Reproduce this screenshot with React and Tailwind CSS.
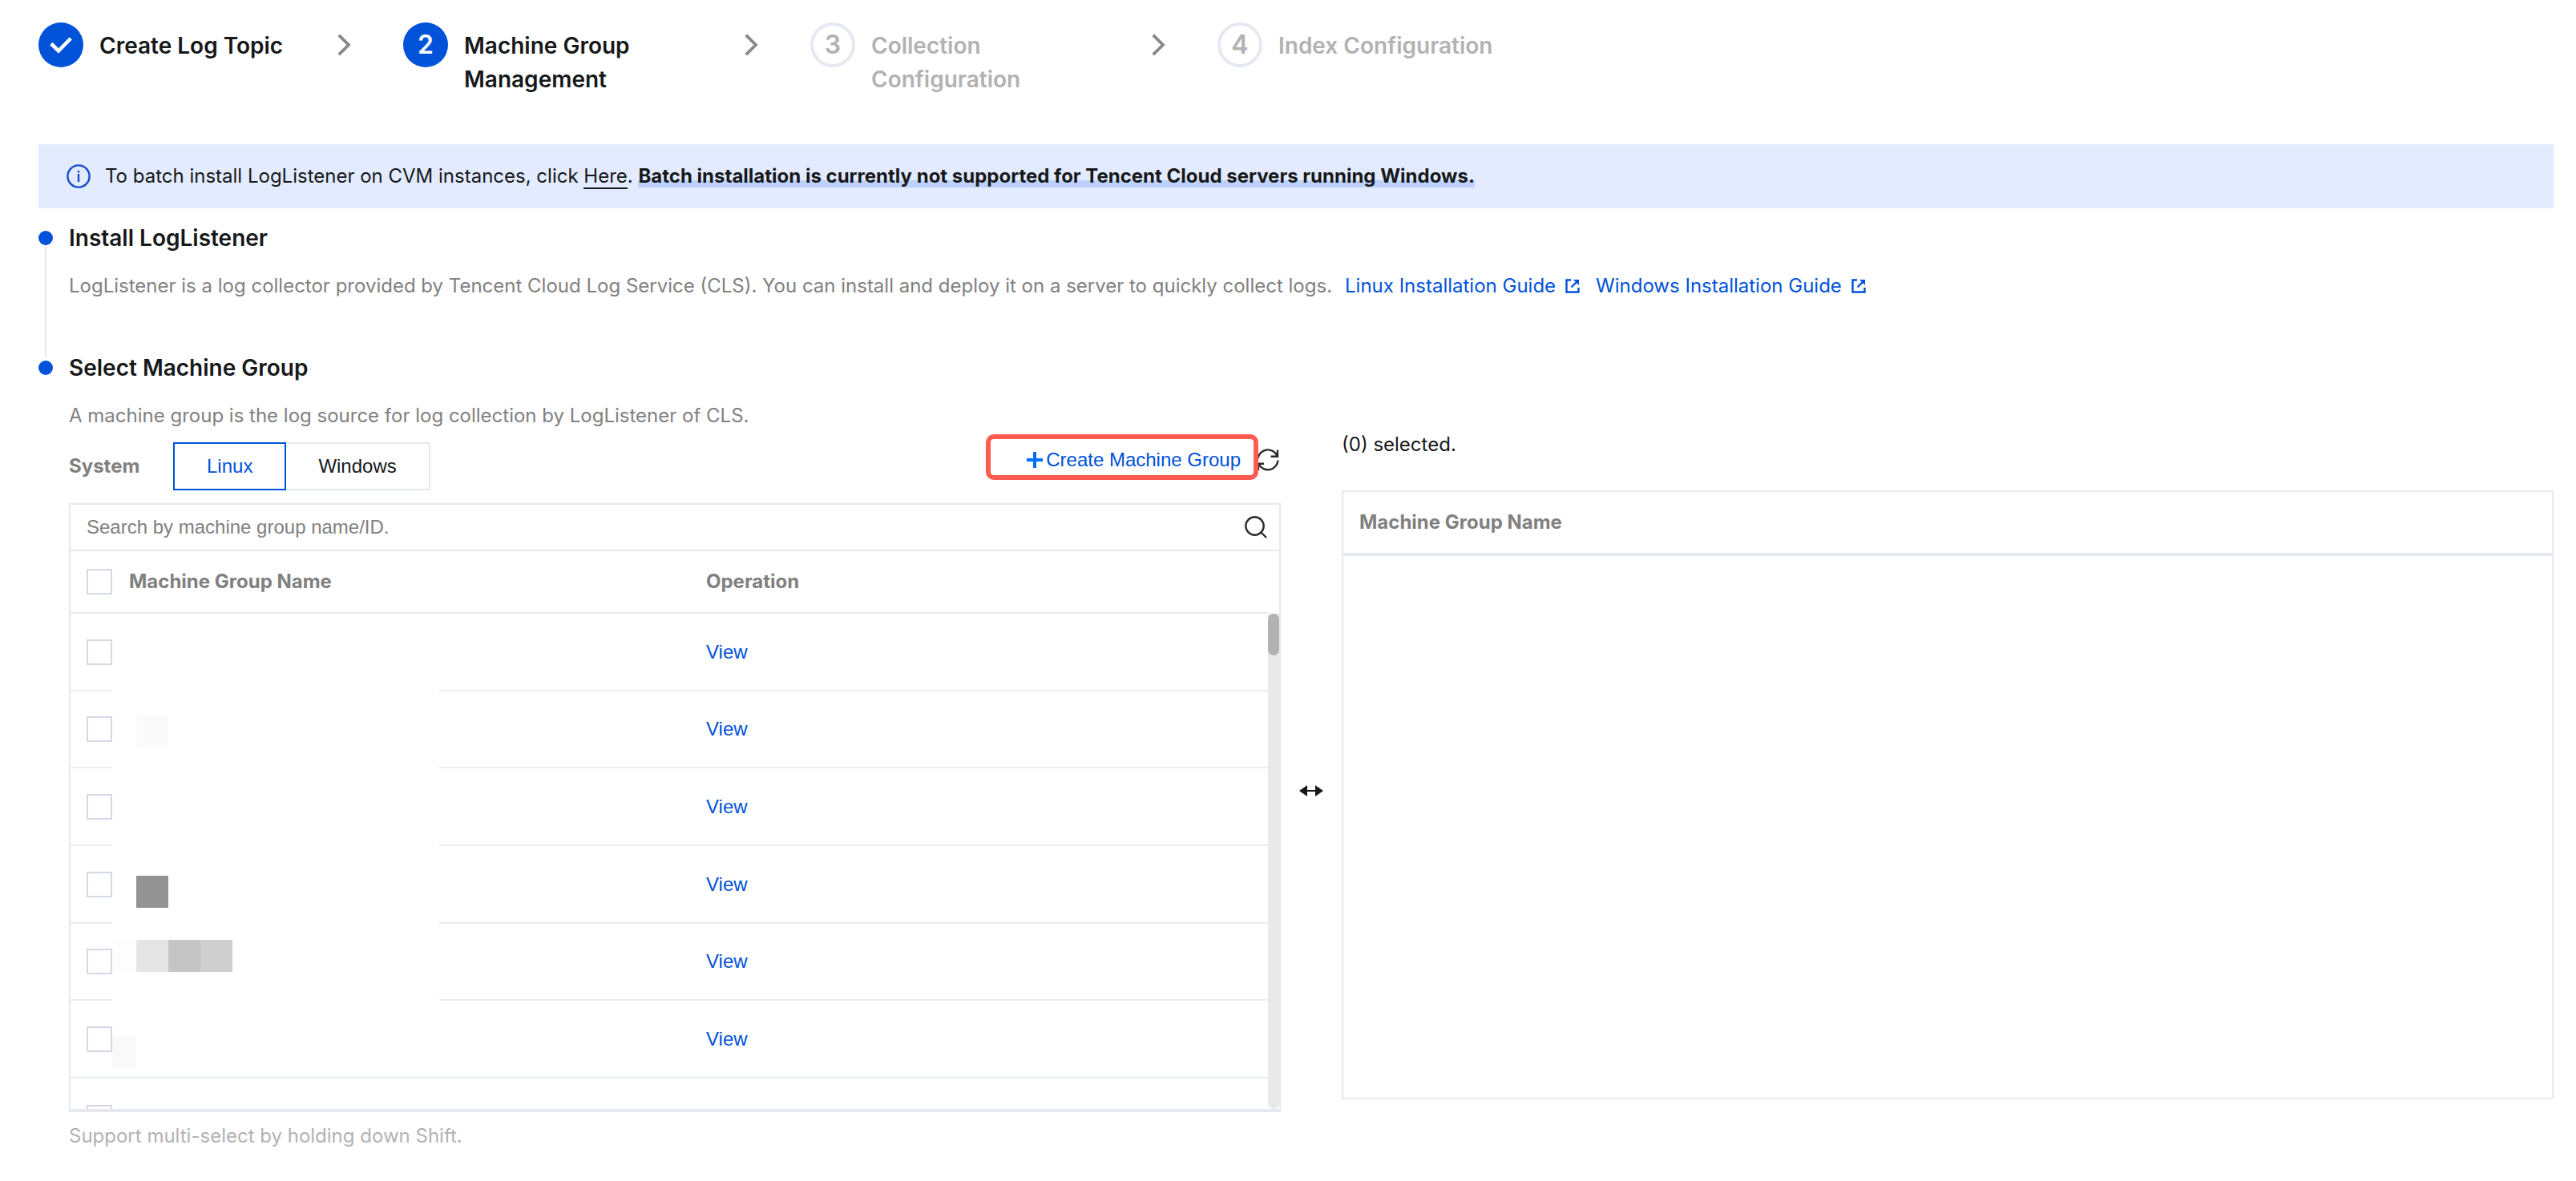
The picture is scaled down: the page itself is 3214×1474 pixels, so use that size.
import { useState } from 'react';

const steps = [
  { title: 'Create Log Topic', status: 'done' },
  { title: 'Machine Group Management', status: 'current' },
  { title: 'Collection Configuration', status: 'todo' },
  { title: 'Index Configuration', status: 'todo' },
];

// redacted names, drawn as mosaic blocks over the name column
const blocks = [
  'left-[30px] top-[126px] w-10 bg-[#fafafa]',
  'left-[30px] top-[327px] w-10 bg-[#939393]',
  'left-0 top-[407px] w-[30px] bg-[#fdfdfd]',
  'left-[30px] top-[407px] w-10 bg-[#e5e5e5]',
  'left-[70px] top-[407px] w-10 bg-[#c5c5c5]',
  'left-[110px] top-[407px] w-10 bg-[#cfcfcf]',
  'left-0 top-[527px] w-[30px] bg-[#f9f9f9]',
];

const groups = [1, 2, 3, 4, 5, 6];

function CheckIcon() {
  return (
    <svg className="size-7" viewBox="0 0 28 28" fill="none" stroke="currentColor" strokeWidth="4.6">
      <path d="M1.8 12.5L11 21.500L26.200 6" />
    </svg>
  );
}

function ChevronIcon() {
  return (
    <svg className="h-7 w-[17px] shrink-0 text-[#888]" viewBox="0 0 17 28" fill="none" stroke="currentColor" strokeWidth="3.800">
      <path d="M1.800 1.800L14 14L1.800 26.200" />
    </svg>
  );
}

function InfoIcon() {
  return (
    <svg className="size-[30px] shrink-0 text-[#164bc9]" viewBox="0 0 30 30" fill="none" stroke="currentColor" strokeWidth="2.400">
      <circle cx="15" cy="15" r="13.600" />
      <path d="M15 12v10M15 8v2.400" />
    </svg>
  );
}

function ExternalIcon() {
  return (
    <svg className="size-[18px]" viewBox="0 0 18 18" fill="none" stroke="currentColor" strokeWidth="2.400">
      <path d="M7 1.500H1.500v15h15V11" />
      <path d="M7.500 10.500L14 4" />
      <path d="M10 1h7v7z" fill="currentColor" stroke="none" />
    </svg>
  );
}

function RefreshIcon() {
  return (
    <svg className="size-7 text-[#2b2b2b]" viewBox="0 0 28 28" fill="none" stroke="currentColor" strokeWidth="2.400">
      <path d="M1.500 12A12.600 12.600 0 0 1 25.500 9M26 1.500v8.200h-8.500" />
      <path d="M26.500 14.500A12.600 12.600 0 0 1 2.500 19M2 27v-8.200h7" />
    </svg>
  );
}

function SearchIcon() {
  return (
    <svg className="size-7 text-[#2b2b2b]" viewBox="0 0 28 28" fill="none" stroke="currentColor" strokeWidth="2.400">
      <circle cx="12.500" cy="12.500" r="11.200" />
      <path d="M20.500 20.500L27 27" />
    </svg>
  );
}

function Checkbox({ label }) {
  return (
    <input
      type="checkbox"
      aria-label={label}
      className="block size-8 appearance-none border-2 border-[#d5d9e5] bg-white checked:bg-[#0052d9]"
    />
  );
}

function Step({ step, number }) {
  const todo = step.status === 'todo';
  return (
    <div className="flex items-start">
      <span
        className={
          todo
            ? 'flex size-14 shrink-0 items-center justify-center rounded-full border-4 border-[#e6e9f2] text-[32px] font-semibold text-[#b2b2b2]'
            : 'flex size-14 shrink-0 items-center justify-center rounded-full bg-[#0052d9] text-[32px] font-semibold text-white'
        }
      >
        {step.status === 'done' ? <CheckIcon /> : number}
      </span>
      <span
        className={
          todo
            ? 'mt-2 ml-5 max-w-[285px] min-w-[232px] text-[28px]/[42px] font-semibold text-[#b2b2b2]'
            : 'mt-2 ml-5 max-w-[285px] min-w-[232px] text-[28px]/[42px] font-semibold text-[#16181a]'
        }
      >
        {step.title}
      </span>
    </div>
  );
}

function Section({ title, last, children }) {
  return (
    <section className="flex gap-5">
      <div className="flex w-[18px] shrink-0 flex-col items-center pt-2">
        <span className="size-[18px] shrink-0 rounded-full bg-[#0052d9]" />
        {!last && <span className="-mb-1 w-[2px] grow bg-[#e6e9f2]" />}
      </div>
      <div className="min-w-0 grow">
        <h2 className="text-[28px]/[34px] font-semibold text-[#16181a]">{title}</h2>
        {children}
      </div>
    </section>
  );
}

function MachineGroupPicker() {
  const [system, setSystem] = useState('Linux');

  return (
    <div className="min-w-0 flex-1 pt-[15px]">
      <div className="flex items-center justify-between">
        <div className="flex items-center">
          <span className="w-[130px] text-2xl font-bold text-[#808080]">System</span>
          {['Linux', 'Windows'].map((name) => (
            <button
              key={name}
              type="button"
              onClick={() => setSystem(name)}
              className={
                system === name
                  ? 'h-[60px] border-2 border-[#0052d9] px-10 font-[Liberation_Sans] text-2xl text-[#0052d9]'
                  : 'h-[60px] border-y-2 border-r-2 border-[#e6e9f0] px-10 font-[Liberation_Sans] text-2xl text-[#16181a]'
              }
            >
              {name}
            </button>
          ))}
        </div>
        <div className="relative flex items-center pr-[2px] pb-4">
          <button type="button" className="flex items-center gap-1 font-[Liberation_Sans] text-2xl text-[#0052d9]">
            <svg className="size-5 text-[#006eff]" viewBox="0 0 20 20" stroke="currentColor" strokeWidth="4">
              <path d="M10 0v20M0 10h20" />
            </svg>
            Create Machine Group
          </button>
          <button type="button" aria-label="Refresh" className="ml-5">
            <RefreshIcon />
          </button>
          <span className="pointer-events-none absolute -top-4 right-7 h-[57px] w-[340px] rounded-[10px] border-6 border-[#ff5b4f]" />
        </div>
      </div>

      <div className="mt-4 border-2 border-b-4 border-[#e6e9f0]">
        <div className="flex h-[58px] items-center border-b-2 border-[#e6e9f0] pr-[15px] pl-5">
          <input
            type="text"
            aria-label="Search by machine group name/ID."
            placeholder="Search by machine group name/ID."
            className="grow font-[Liberation_Sans] text-2xl text-[#16181a] outline-none placeholder:text-[#808080]"
          />
          <button type="button" aria-label="Search">
            <SearchIcon />
          </button>
        </div>
        <div className="relative flex h-[696px] overflow-hidden">
          <table className="h-fit grow table-fixed border-separate border-spacing-0 text-left">
            <thead>
              <tr className="h-[78px] text-2xl text-[#808080] *:border-b-2 *:border-[#e6e9f0]">
                <th className="w-[73px] pl-5">
                  <Checkbox label="Select all" />
                </th>
                <th className="w-[720px] font-bold">Machine Group Name</th>
                <th className="font-bold">Operation</th>
              </tr>
            </thead>
            <tbody>
              {groups.map((n) => (
                <tr key={n} className="h-[97px] *:border-b-2 *:border-[#e9edf2] nth-[3n+2]:h-[96px]">
                  <td className="pl-5">
                    <Checkbox label={`Select machine group ${n}`} />
                  </td>
                  <td />
                  <td className="font-[Liberation_Sans] text-2xl">
                    <a href="#view" className="text-[#0052d9]">View</a>
                  </td>
                </tr>
              ))}
              <tr className="h-[97px]">
                <td className="pl-5">
                  <Checkbox label="Select machine group 7" />
                </td>
                <td colSpan={2} />
              </tr>
            </tbody>
          </table>
          <div className="mt-[78px] w-[14px] shrink-0 rounded-b-full bg-[#e9e9e9]">
            <div className="h-[52px] rounded-full bg-[#b2b2b2]" />
          </div>
          <div className="absolute top-[78px] left-[52px] w-[408px]">
            <div className="h-[520px] bg-white" />
            {blocks.map((block) => (
              <span key={block} className={`absolute h-10 ${block}`} />
            ))}
          </div>
        </div>
      </div>
      <p className="mt-3 text-2xl/[36px] text-[#b2b2b2]">Support multi-select by holding down Shift.</p>
    </div>
  );
}

export default function App() {
  return (
    <main className="bg-white px-12 pt-7 pr-7 font-[Inter,sans-serif] text-[#16181a]">
      <ol className="flex min-h-[152px] items-start">
        {steps.map((step, i) => (
          <li key={step.title} className="flex items-start">
            {i > 0 && (
              <span className="mx-[65px] mt-[14px]">
                <ChevronIcon />
              </span>
            )}
            <Step step={step} number={i + 1} />
          </li>
        ))}
      </ol>

      <div className="flex h-20 items-center gap-[18px] bg-[#e2ebff] px-[35px] text-2xl">
        <InfoIcon />
        <p>
          To batch install LogListener on CVM instances, click{' '}
          <a href="#batch" className="border-b-2 border-[#16181a]">Here</a>.{' '}
          <strong className="bg-linear-to-b from-transparent from-70% to-[#bcd1fb] to-70% font-bold">
            Batch installation is currently not supported for Tencent Cloud servers running Windows.
          </strong>
        </p>
      </div>

      <div className="pt-5">
        <Section title="Install LogListener">
          <p className="mt-[25px] mb-[67px] text-2xl/[36px] text-[#808080]">
            LogListener is a log collector provided by Tencent Cloud Log Service (CLS). You can install and deploy it on a server to quickly collect logs.
            <a href="#linux" className="ml-4 inline-flex items-center gap-3 text-[#0052d9]">
              Linux Installation Guide <ExternalIcon />
            </a>
            <a href="#windows" className="ml-5 inline-flex items-center gap-3 text-[#0052d9]">
              Windows Installation Guide <ExternalIcon />
            </a>
          </p>
        </Section>
        <Section title="Select Machine Group" last>
          <p className="mt-[25px] text-2xl/[36px] text-[#808080]">
            A machine group is the log source for log collection by LogListener of CLS.
          </p>
          <div className="flex items-center">
            <MachineGroupPicker />
            <svg className="mx-[23px] h-[14px] w-[30px] shrink-0" viewBox="0 0 30 14" fill="#16181a">
              <path d="M0 7L10 0v6h10V0l10 7-10 7V8H10v6z" />
            </svg>
            <div className="min-w-0 flex-1 self-start">
              <p className="text-2xl/[36px]">(0) selected.</p>
              <table className="mt-[39px] h-[760px] w-full border-separate border-spacing-0 border-2 border-[#e6e9f0] text-left">
                <thead>
                  <tr className="h-20">
                    <th className="border-b-4 border-[#e6e9f0] pl-5 text-2xl font-bold text-[#808080]">Machine Group Name</th>
                  </tr>
                </thead>
                <tbody>
                  <tr>
                    <td />
                  </tr>
                </tbody>
              </table>
            </div>
          </div>
        </Section>
      </div>
    </main>
  );
}
